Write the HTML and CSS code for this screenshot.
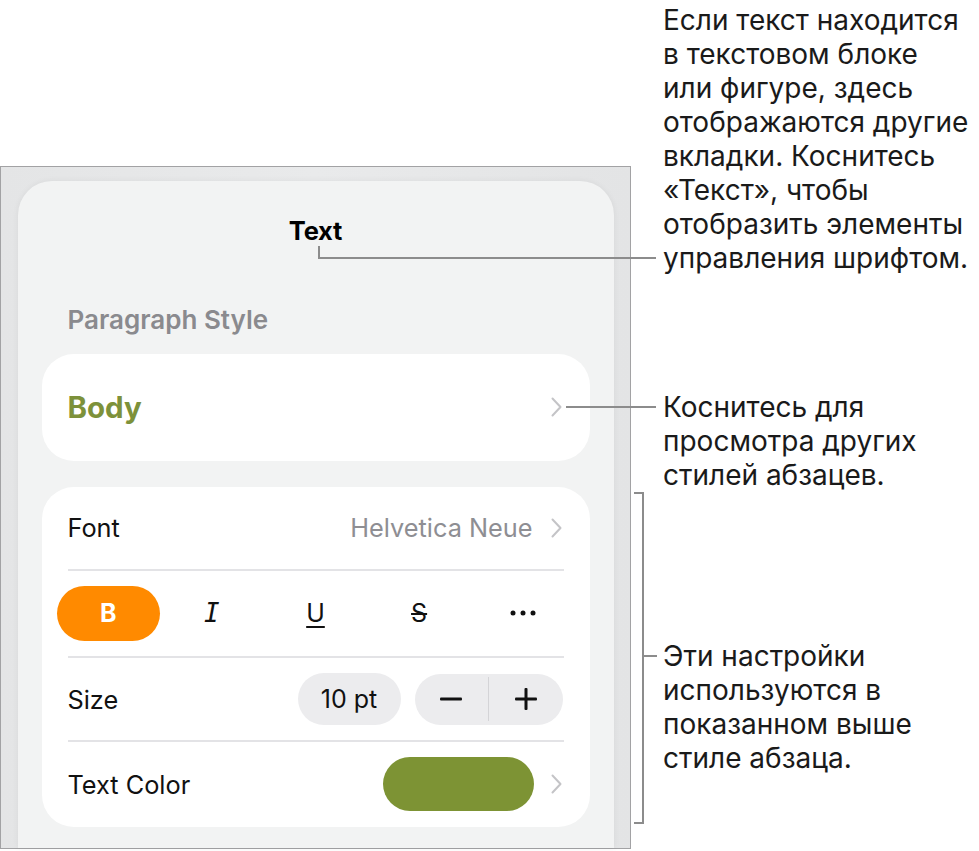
FILE: index.html
```html
<!DOCTYPE html>
<html lang="ru">
<head>
<meta charset="utf-8">
<title>Text</title>
<link rel="stylesheet" href="styles.css">
</head>
<body>
<div class="stage">
  <div class="frame">
    <div class="sheet">
      <div class="title">Text</div>
      <div class="section-label">Paragraph Style</div>
      <div class="card style-card">
        <span class="body-name">Body</span>
        <svg class="chev" width="11" height="20" viewBox="0 0 11 20"><path d="M1.5 1.5 L9.5 10 L1.5 18.5" fill="none" stroke="#c4c4c7" stroke-width="2" stroke-linecap="round" stroke-linejoin="round"/></svg>
      </div>
      <div class="card list-card">
        <div class="row font-row">
          <span class="label">Font</span>
          <span class="value">Helvetica Neue</span>
          <svg class="chev" width="11" height="20" viewBox="0 0 11 20"><path d="M1.5 1.5 L9.5 10 L1.5 18.5" fill="none" stroke="#c4c4c7" stroke-width="2" stroke-linecap="round" stroke-linejoin="round"/></svg>
        </div>
        <div class="sep"></div>
        <div class="styles-row">
          <div class="sbtn bold-btn">B</div>
          <div class="sbtn italic-btn">I</div>
          <div class="sbtn under-btn">U</div>
          <div class="sbtn strike-btn">S</div>
          <div class="sbtn more-btn">
            <svg width="26" height="6" viewBox="0 0 26 6"><circle cx="3" cy="3" r="2.5" fill="#111"/><circle cx="13" cy="3" r="2.5" fill="#111"/><circle cx="23" cy="3" r="2.5" fill="#111"/></svg>
          </div>
        </div>
        <div class="sep"></div>
        <div class="row size-row">
          <span class="label">Size</span>
          <span class="spacer"></span>
          <div class="pt-pill">10 pt</div>
          <div class="stepper">
            <div class="step">
              <svg width="22" height="4" viewBox="0 0 22 4"><rect x="0" y="0.5" width="22" height="3" rx="1" fill="#111"/></svg>
            </div>
            <div class="step-div"></div>
            <div class="step">
              <svg width="22" height="22" viewBox="0 0 22 22"><rect x="0" y="9.5" width="22" height="3" rx="1" fill="#111"/><rect x="9.5" y="0" width="3" height="22" rx="1" fill="#111"/></svg>
            </div>
          </div>
        </div>
        <div class="sep"></div>
        <div class="row color-row">
          <span class="label">Text Color</span>
          <span class="spacer"></span>
          <div class="swatch"></div>
          <svg class="chev" width="11" height="20" viewBox="0 0 11 20"><path d="M1.5 1.5 L9.5 10 L1.5 18.5" fill="none" stroke="#c4c4c7" stroke-width="2" stroke-linecap="round" stroke-linejoin="round"/></svg>
        </div>
      </div>
    </div>
  </div>

  <p class="note note-1">Если текст находится<br>в текстовом блоке<br>или фигуре, здесь<br>отображаются другие<br>вкладки. Коснитесь<br>«Текст», чтобы<br>отобразить элементы<br>управления шрифтом.</p>
  <p class="note note-2">Коснитесь для<br>просмотра других<br>стилей абзацев.</p>
  <p class="note note-3">Эти настройки<br>используются в<br>показанном выше<br>стиле абзаца.</p>

  <div class="lead lead-1v"></div>
  <div class="lead lead-1h"></div>
  <div class="lead lead-2"></div>
  <div class="lead bracket-v"></div>
  <div class="lead bracket-top"></div>
  <div class="lead bracket-bot"></div>
  <div class="lead bracket-mid"></div>
</div>
</body>
</html>
```
FILE: styles.css
```css
* { box-sizing: border-box; }
html, body { margin: 0; padding: 0; background: #fff; }
body {
  font-family: Inter, "Noto Sans", sans-serif;
  color: #1d1d1f;
}
.stage {
  position: relative;
  width: 979px;
  height: 851px;
  overflow: hidden;
}
.frame {
  margin-top: 166px;
  width: 631px;
  height: 683px;
  border: 1.5px solid #a2a2a4;
  background: linear-gradient(90deg, #e4e5e6 0%, #e9eaeb 50%, #e3e4e5 100%);
  padding: 13.5px 16.5px 0 16.5px;
  display: flex;
  flex-direction: column;
}
.sheet {
  flex: 1;
  background: #f2f3f3;
  border-radius: 34px 34px 0 0;
  box-shadow: 0 0 6px rgba(0,0,0,0.06);
  padding: 35px 24px 0 24px;
  display: flex;
  flex-direction: column;
}
.title {
  text-align: center;
  font-weight: 700;
  font-size: 25.5px;
  line-height: 30px;
  height: 30px;
  color: #000;
  letter-spacing: -0.2px;
}
.section-label {
  margin-top: 59px;
  padding-left: 26px;
  font-size: 26px;
  line-height: 30px;
  font-weight: 600;
  color: #8a8a8e;
}
.card {
  background: #fff;
  border-radius: 32px;
}
.style-card {
  margin-top: 19px;
  height: 107px;
  display: flex;
  align-items: center;
  padding: 0 26px 0 26px;
  justify-content: space-between;
}
.body-name {
  font-size: 29.5px;
  font-weight: 700;
  color: #7d913a;
}
.chev { display: block; flex: none; margin-right: 2px; }
.list-card {
  margin-top: 26px;
  height: 340px;
  padding: 0 26px 0 26px;
  display: flex;
  flex-direction: column;
}
.sep {
  height: 1.5px;
  background: #e3e3e6;
  flex: none;
}
.row {
  display: flex;
  align-items: center;
  font-size: 25.3px;
  color: #111;
}
.label { font-weight: 400; }
.spacer { flex: 1; }
.font-row { height: 83px; }
.font-row .label { flex: 1; }
.font-row .value {
  color: #8e8e93;
  margin-right: 18px;
}
.styles-row {
  height: 86px;
  margin: 0 -11px;
  display: grid;
  grid-template-columns: repeat(5, 1fr);
  align-items: center;
}
.sbtn {
  height: 55px;
  display: flex;
  align-items: center;
  justify-content: center;
  font-size: 25px;
  color: #111;
}
.bold-btn {
  background: #ff8a00;
  border-radius: 28px;
  color: #fff;
  font-weight: 700;
  font-size: 25px;
}
.italic-btn {
  font-family: "DejaVu Sans Mono", monospace;
  font-style: italic;
  font-size: 26px;
}
.under-btn {
  text-decoration: underline;
  text-underline-offset: 4px;
  text-decoration-thickness: 2px;
}
.strike-btn {
  text-decoration: line-through;
  text-decoration-thickness: 2px;
}
.size-row { height: 83px; }
.pt-pill {
  width: 103px;
  height: 52px;
  border-radius: 26px;
  background: #ececee;
  display: flex;
  align-items: center;
  justify-content: center;
  font-size: 25px;
}
.stepper {
  margin-left: 14px;
  margin-right: 1px;
  width: 148px;
  height: 51px;
  border-radius: 26px;
  background: #ececee;
  display: flex;
  align-items: center;
}
.step {
  flex: 1;
  display: flex;
  align-items: center;
  justify-content: center;
}
.step-div {
  width: 1px;
  height: 44px;
  background: #d4d4d7;
}
.color-row { height: 85px; }
.swatch {
  width: 151px;
  height: 54px;
  border-radius: 27px;
  background: #7d9334;
  margin-right: 17px;
}
.note {
  position: absolute;
  margin: 0;
  left: 663px;
  font-size: 28px;
  line-height: 34px;
  color: #1a1a1a;
}
.note-1 { top: 3px; }
.note-2 { top: 390px; }
.note-3 { top: 639px; }
.lead {
  position: absolute;
  background: #8c8c8c;
}
.lead-1v { left: 318px; top: 246px; width: 2px; height: 13px; }
.lead-1h { left: 318px; top: 257px; width: 338px; height: 2px; }
.lead-2 { left: 566px; top: 406px; width: 90px; height: 2px; }
.bracket-v { left: 642px; top: 492px; width: 2px; height: 332px; }
.bracket-top { left: 634px; top: 492px; width: 10px; height: 2px; }
.bracket-bot { left: 634px; top: 822px; width: 10px; height: 2px; }
.bracket-mid { left: 642px; top: 655px; width: 15px; height: 2px; }
```
